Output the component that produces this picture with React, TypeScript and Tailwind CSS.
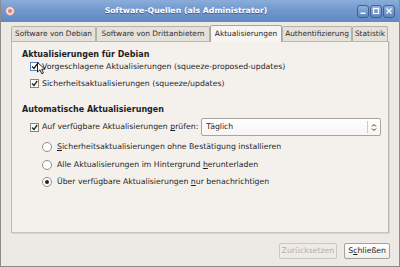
import { type ReactNode } from 'react';

const font = { fontFamily: '"DejaVu Sans", Verdana, sans-serif' };

function Check({ checked = true, focus = false }: { checked?: boolean; focus?: boolean }) {
    return (
        <div
            className={`w-[9px] h-[9px] shrink-0 border flex items-center justify-center bg-white ${
                focus ? 'border-[#5b7fb8] bg-[#cfdcf0]' : 'border-[#8a877f]'
            }`}
        >
            {checked && (
                <svg width="7" height="7" viewBox="0 0 7 7">
                    <path d="M1 3.5 L3 5.5 L6.2 1" stroke="#222" strokeWidth="1.3" fill="none" />
                </svg>
            )}
        </div>
    );
}

function Radio({ on = false }: { on?: boolean }) {
    return (
        <div className="w-[10px] h-[10px] shrink-0 rounded-full border border-[#8f8c85] bg-white flex items-center justify-center">
            {on && <div className="w-[4px] h-[4px] rounded-full bg-[#222]" />}
        </div>
    );
}

function Tab({ children, w, active = false }: { children: ReactNode; w: string; active?: boolean }) {
    return (
        <div
            className={`${w} text-[7.4px] whitespace-nowrap border border-b-0 rounded-t-[2px] flex items-center justify-center ${
                active
                    ? 'h-[17px] bg-[#f7f5f2] border-[#a9a49b] -mb-px'
                    : 'h-[15px] bg-[#e4e0da] border-[#b7b2a9] text-[#2e2e2e]'
            }`}
        >
            {children}
        </div>
    );
}

export default function App() {
    return (
        <div
            className="w-[400px] h-[267px] bg-[#edeae5] border border-[#8d8b87] border-t-0 flex flex-col text-[7.75px] text-[#1f1f1f] overflow-hidden"
            style={font}
        >
            {/* title bar */}
            <div className="h-[22px] shrink-0 bg-gradient-to-b from-[#8aaddb] via-[#6f96cc] to-[#6089c3] flex items-center px-[4px]">
                <div className="w-[10px] h-[10px] rounded-full bg-[#f3dada] border border-[#b98e93] flex items-center justify-center">
                    <div className="w-[4px] h-[4px] rounded-full bg-[#d77b86]" />
                </div>
                <div className="flex-1 text-center text-white font-bold text-[7.8px] [text-shadow:0_1px_0_rgba(40,60,100,0.6)]">
                    Software-Quellen (als Administrator)
                </div>
                <div className="flex gap-[1px]">
                    {['min', 'max', 'close'].map((k) => (
                        <div
                            key={k}
                            className="w-[12px] h-[13px] rounded-[3px] border border-[#3f5f93] bg-gradient-to-b from-[#8fb1de] to-[#5e86c0] flex items-center justify-center"
                        >
                            <svg width="8" height="8" viewBox="0 0 8 8">
                                {k === 'min' && <rect x="1.5" y="5.5" width="5" height="1.5" fill="#fff" />}
                                {k === 'max' && <rect x="1.5" y="1.5" width="5" height="5" fill="none" stroke="#fff" strokeWidth="1.2" />}
                                {k === 'close' && <path d="M1.5 1.5 L6.5 6.5 M6.5 1.5 L1.5 6.5" stroke="#fff" strokeWidth="1.4" />}
                            </svg>
                        </div>
                    ))}
                </div>
            </div>

            {/* tabs */}
            <div className="mt-[2px] px-[10px] flex items-end h-[17px] shrink-0 relative z-10">
                <Tab w="w-[85px]">Software von Debian</Tab>
                <Tab w="w-[114px]">Software von Drittanbietern</Tab>
                <Tab w="w-[72px]" active>Aktualisierungen</Tab>
                <Tab w="w-[70px]">Authentifizierung</Tab>
                <Tab w="w-[36px]">Statistik</Tab>
            </div>

            {/* panel */}
            <div className="mx-[10px] h-[192px] shrink-0 bg-[#f4f1ed] border border-[#bdb8ae] border-b-[#c9c4bb] shadow-[1px_1px_0_#d8d3cb] flex flex-col pl-[10px] pr-[11px]">
                <div className="font-bold text-[8px] mt-[8px] h-[10px] leading-[10px]">Aktualisierungen für Debian</div>
                <div className="pl-[8px] mt-[2px] flex flex-col gap-[8px]">
                    <div className="flex items-center gap-[3px] h-[9px]">
                        <Check focus />
                        <span className="relative whitespace-nowrap">
                            Vorgeschlagene Aktualisierungen (squeeze-proposed-updates)
                            <svg className="absolute left-[-5px] top-[1px]" width="9" height="13" viewBox="0 0 9 13">
                                <path d="M0.5 0.5 L0.5 10 L3 7.8 L4.8 11.8 L6.4 11 L4.7 7.2 L8 7.2 Z" fill="#fff" stroke="#111" strokeWidth="0.9" />
                            </svg>
                        </span>
                    </div>
                    <div className="flex items-center gap-[3px] h-[9px]">
                        <Check />
                        <span className="whitespace-nowrap">Sicherheitsaktualisierungen (squeeze/updates)</span>
                    </div>
                </div>

                <div className="font-bold text-[8px] mt-[17px] h-[10px] leading-[10px]">Automatische Aktualisierungen</div>
                <div className="pl-[8px] mt-[3px] flex items-center gap-[3px] h-[18px]">
                    <Check />
                    <span className="flex-1 whitespace-nowrap">
                        Auf verfügbare Aktualisierungen <u>p</u>rüfen:
                    </span>
                    <div className="w-[180px] shrink-0 h-[18px] border border-[#a9a59c] rounded-[2px] bg-gradient-to-b from-white to-[#f6f5f3] flex items-center">
                        <span className="flex-1 pl-[4px]">Täglich</span>
                        <div className="w-px h-[12px] bg-[#cfcbc4]" />
                        <svg className="mx-[3px]" width="6" height="9" viewBox="0 0 6 9">
                            <path d="M1 3.5 L3 1.5 L5 3.5 M1 5.5 L3 7.5 L5 5.5" stroke="#333" strokeWidth="1" fill="none" />
                        </svg>
                    </div>
                </div>
                <div className="pl-[20px] mt-[6px] flex flex-col gap-[7.5px]">
                    <div className="flex items-center gap-[5px] h-[10px]">
                        <Radio />
                        <span className="whitespace-nowrap">
                            <u>S</u>icherheitsaktualisierungen ohne Bestätigung installieren
                        </span>
                    </div>
                    <div className="flex items-center gap-[5px] h-[10px]">
                        <Radio />
                        <span className="whitespace-nowrap">
                            Alle Aktualisierungen im Hintergrund <u>h</u>erunterladen
                        </span>
                    </div>
                    <div className="flex items-center gap-[5px] h-[10px]">
                        <Radio on />
                        <span className="whitespace-nowrap">
                            Über verfügbare Aktualisierungen <u>n</u>ur benachrichtigen
                        </span>
                    </div>
                </div>
            </div>

            {/* buttons */}
            <div className="flex justify-end gap-[7px] pr-[9px] mt-[10px]">
                <div className="h-[16px] px-[2px] border border-[#ccc8c0] rounded-[2px] bg-[#eeebe6] text-[#b3afa7] flex items-center">
                    Zurücksetzen
                </div>
                <div className="h-[16px] px-[3px] border border-[#a6a299] rounded-[2px] bg-gradient-to-b from-white to-[#f1efec] flex items-center">
                    S<u>c</u>hließen
                </div>
            </div>
        </div>
    );
}
